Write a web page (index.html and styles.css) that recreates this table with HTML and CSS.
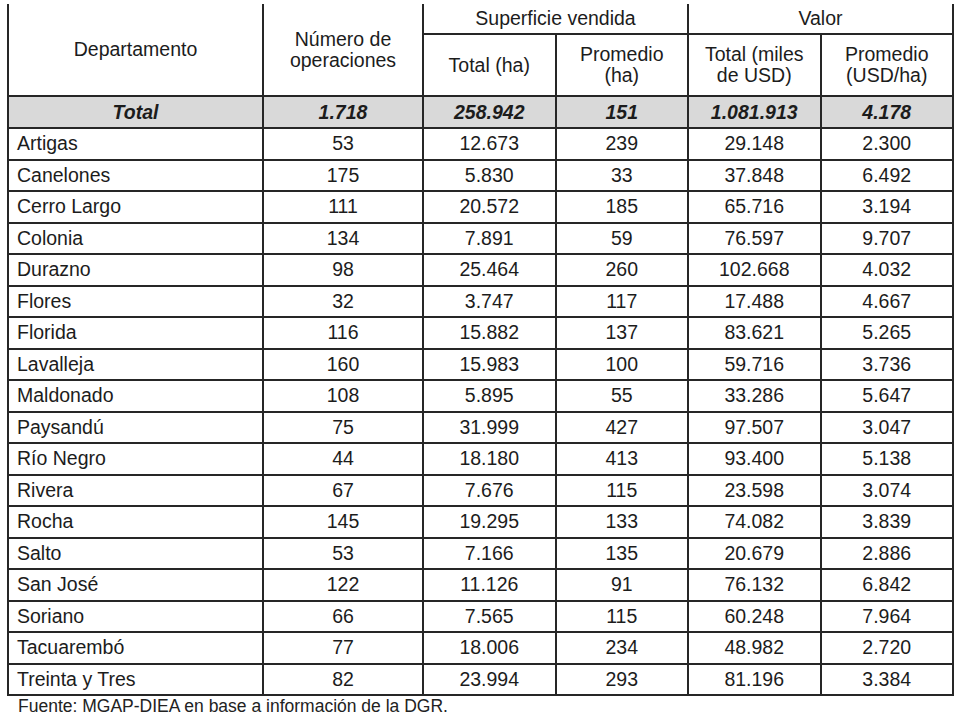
FILE: index.html
```html
<!DOCTYPE html>
<html lang="es">
<head>
    <meta charset="UTF-8">
    <title>Compraventas de tierras por departamento</title>
    <link rel="stylesheet" href="styles.css">
</head>
<body>
    <table class="tabla">
        <colgroup>
            <col class="c-dep">
            <col class="c-ops">
            <col class="c-num">
            <col class="c-num">
            <col class="c-num">
            <col class="c-num">
        </colgroup>
        <thead>
            <tr class="h1">
                <th rowspan="2" class="left-head">Departamento</th>
                <th rowspan="2">Número de<br>operaciones</th>
                <th colspan="2">Superficie vendida</th>
                <th colspan="2">Valor</th>
            </tr>
            <tr class="h2">
                <th>Total (ha)</th>
                <th>Promedio<br>(ha)</th>
                <th>Total (miles<br>de USD)</th>
                <th>Promedio<br>(USD/ha)</th>
            </tr>
        </thead>
        <tbody>
            <tr class="total">
                <td>Total</td>
                <td>1.718</td>
                <td>258.942</td>
                <td>151</td>
                <td>1.081.913</td>
                <td>4.178</td>
            </tr>
            <tr><td>Artigas</td><td>53</td><td>12.673</td><td>239</td><td>29.148</td><td>2.300</td></tr>
            <tr><td>Canelones</td><td>175</td><td>5.830</td><td>33</td><td>37.848</td><td>6.492</td></tr>
            <tr><td>Cerro Largo</td><td>111</td><td>20.572</td><td>185</td><td>65.716</td><td>3.194</td></tr>
            <tr><td>Colonia</td><td>134</td><td>7.891</td><td>59</td><td>76.597</td><td>9.707</td></tr>
            <tr><td>Durazno</td><td>98</td><td>25.464</td><td>260</td><td>102.668</td><td>4.032</td></tr>
            <tr><td>Flores</td><td>32</td><td>3.747</td><td>117</td><td>17.488</td><td>4.667</td></tr>
            <tr><td>Florida</td><td>116</td><td>15.882</td><td>137</td><td>83.621</td><td>5.265</td></tr>
            <tr><td>Lavalleja</td><td>160</td><td>15.983</td><td>100</td><td>59.716</td><td>3.736</td></tr>
            <tr><td>Maldonado</td><td>108</td><td>5.895</td><td>55</td><td>33.286</td><td>5.647</td></tr>
            <tr><td>Paysandú</td><td>75</td><td>31.999</td><td>427</td><td>97.507</td><td>3.047</td></tr>
            <tr><td>Río Negro</td><td>44</td><td>18.180</td><td>413</td><td>93.400</td><td>5.138</td></tr>
            <tr><td>Rivera</td><td>67</td><td>7.676</td><td>115</td><td>23.598</td><td>3.074</td></tr>
            <tr><td>Rocha</td><td>145</td><td>19.295</td><td>133</td><td>74.082</td><td>3.839</td></tr>
            <tr><td>Salto</td><td>53</td><td>7.166</td><td>135</td><td>20.679</td><td>2.886</td></tr>
            <tr><td>San José</td><td>122</td><td>11.126</td><td>91</td><td>76.132</td><td>6.842</td></tr>
            <tr><td>Soriano</td><td>66</td><td>7.565</td><td>115</td><td>60.248</td><td>7.964</td></tr>
            <tr><td>Tacuarembó</td><td>77</td><td>18.006</td><td>234</td><td>48.982</td><td>2.720</td></tr>
            <tr><td>Treinta y Tres</td><td>82</td><td>23.994</td><td>293</td><td>81.196</td><td>3.384</td></tr>
        </tbody>
    </table>
    <p class="fuente">Fuente: MGAP-DIEA en base a información de la DGR.</p>
</body>
</html>
```

FILE: styles.css
```css
* {
    margin: 0;
    padding: 0;
    box-sizing: border-box;
}

body {
    background: #fff;
    color: #1c1c1c;
    font-family: 'Liberation Sans', Arial, sans-serif;
    padding: 4px 0 0 7px;
}

.tabla {
    border-collapse: collapse;
    table-layout: fixed;
    width: 945px;
    font-size: 19.5px;
}

.c-dep { width: 255px; }
.c-ops { width: 160px; }
.c-num { width: 132.5px; }

.tabla th,
.tabla td {
    border: 2px solid #262626;
    text-align: center;
    vertical-align: middle;
    font-weight: normal;
    line-height: 21px;
}

.tabla thead tr.h1 th {
    border-top: none;
}

.h1 { height: 30px; }
.h2 { height: 62px; }

.tabla tbody tr {
    height: 31.5px;
}

.tabla tbody td:first-child {
    text-align: left;
    padding-left: 8px;
}

.total {
    background: #d9d9d9;
}

.total td {
    font-weight: bold;
    font-style: italic;
}

.tabla tbody tr.total td:first-child {
    text-align: center;
    padding-left: 0;
}

.tabla tbody tr.total {
    height: 32px;
}

.fuente {
    font-size: 17.5px;
    padding-left: 11px;
    margin-top: 0;
    color: #222;
}
```
